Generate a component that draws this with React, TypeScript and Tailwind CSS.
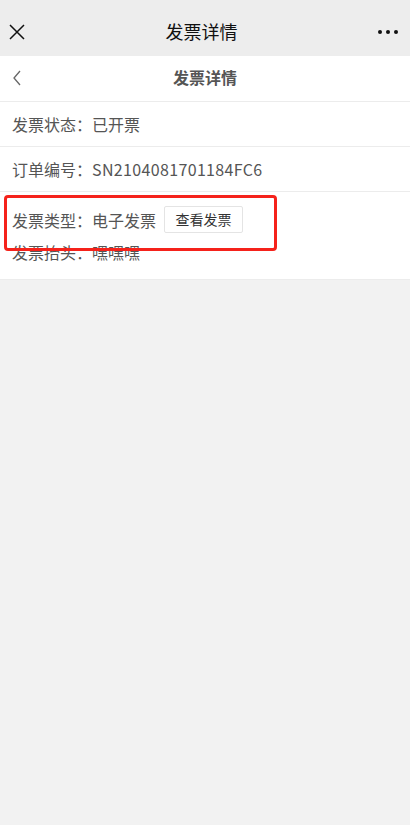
export default function App() {
  return (
    <div
      className="min-h-[825px] w-full bg-[#f2f2f2] flex flex-col"
      style={{ fontFamily: '"Noto Sans CJK SC", "Noto Sans", sans-serif' }}
    >
      {/* wechat top bar */}
      <div className="h-14 bg-[#ededed] flex items-center justify-between px-[9px] pt-[7px]">
        <svg className="w-4 h-4 mt-[1px]" viewBox="0 0 16 16" fill="none" stroke="#111" strokeWidth="1.5">
          <path d="M1 1L15 15M15 1L1 15" />
        </svg>
        <div className="text-[18px] text-[#111]">发票详情</div>
        <div className="flex gap-[4px] pr-[3px]">
          <span className="w-[4px] h-[4px] rounded-full bg-[#111]" />
          <span className="w-[4px] h-[4px] rounded-full bg-[#111]" />
          <span className="w-[4px] h-[4px] rounded-full bg-[#111]" />
        </div>
      </div>

      {/* page header */}
      <div className="h-[46px] bg-white border-b border-[#ececec] relative flex items-center justify-center">
        <svg className="absolute left-[12px] top-[13px] w-[10px] h-[18px]" viewBox="0 0 10 18" fill="none" stroke="#666" strokeWidth="1.3">
          <path d="M8 2L2 9L8 16" />
        </svg>
        <div className="text-[16px] font-bold text-[#555] pb-[4px]">发票详情</div>
      </div>

      <div className="flex flex-col gap-[1px] bg-[#ececec] border-b border-[#ececec] text-[16px] text-[#555]">
        <div className="h-[44px] bg-white flex items-center px-3">发票状态：已开票</div>
        <div className="h-[44px] bg-white flex items-center px-3">
          订单编号：<span className="tracking-[0.35px]">SN2104081701184FC6</span>
        </div>
        <div className="h-[87px] bg-white relative px-3 pt-[14px]">
          <div className="flex items-center h-[27px]">
            <span>发票类型：电子发票</span>
            <button className="ml-[8px] h-[27px] w-[79px] border border-[#e4e4e4] rounded-[2px] text-[14px] text-[#333] bg-white">
              查看发票
            </button>
          </div>
          <div className="mt-[9px] leading-[20px]">发票抬头：嘿嘿嘿</div>
          <div className="absolute left-[4px] top-[3px] w-[273px] h-[56px] border-[3px] border-[#f5221b] rounded-[4px]" />
        </div>
      </div>
    </div>
  );
}
